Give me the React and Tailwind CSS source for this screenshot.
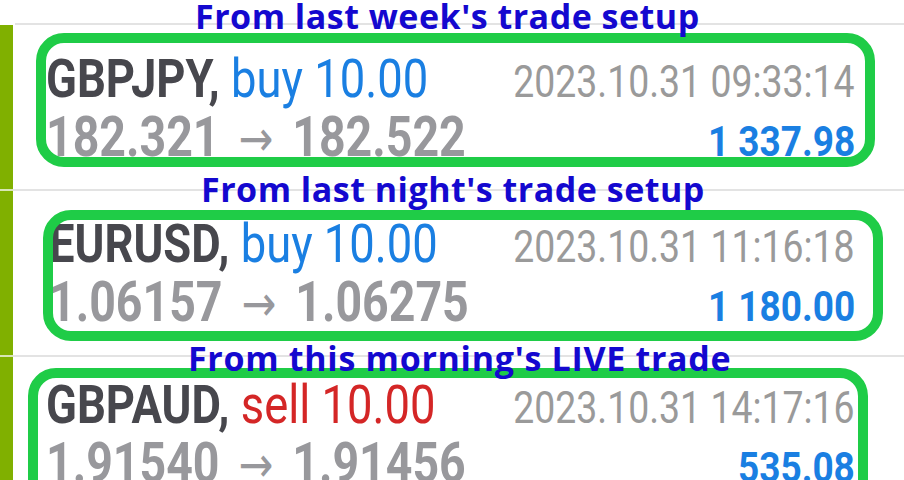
import React from 'react';

const trades = [
  {
    symbol: 'GBPJPY',
    side: 'buy',
    lots: '10.00',
    time: '2023.10.31 09:33:14',
    open: '182.321',
    close: '182.522',
    profit: '1 337.98',
    pad: 'pl-[33px] pt-[25px]',
    first: true,
  },
  {
    symbol: 'EURUSD',
    side: 'buy',
    lots: '10.00',
    time: '2023.10.31 11:16:18',
    open: '1.06157',
    close: '1.06275',
    profit: '1 180.00',
    pad: 'pl-[36px] pt-[24px]',
  },
  {
    symbol: 'GBPAUD',
    side: 'sell',
    lots: '10.00',
    time: '2023.10.31 14:17:16',
    open: '1.91540',
    close: '1.91456',
    profit: '535.08',
    pad: 'pl-[33px] pt-[19px]',
  },
];

function TradeRow({ trade }) {
  const sideColor = trade.side === 'buy' ? 'text-[#1a7fe2]' : 'text-[#d42626]';

  return (
    <div>
      {trade.first ? (
        <div className="h-[2px] ml-[15px] bg-[#e3e3e3]" />
      ) : (
        <div className="flex h-[2px]">
          <div className="w-[13px] shrink-0 bg-[#d8e6b4]" />
          <div className="flex-1 bg-[#e3e3e3]" />
        </div>
      )}
      <div className="flex h-[164px]">
        <div className="w-[13px] shrink-0 bg-[#80b000]" />
        <div className={`flex-1 min-w-0 pr-[49px] ${trade.pad}`}>
          <div className="flex items-baseline h-[58px] leading-[58px]">
            <span className="shrink-0 inline-block origin-left scale-x-[0.84] whitespace-nowrap text-[54px]">
              <span className="font-bold text-[#47474d]">{trade.symbol},</span>{' '}
              <span className={sideColor}>
                {trade.side} {trade.lots}
              </span>
            </span>
            <div className="flex-1 min-w-0 flex justify-end">
              <span className="shrink-0 inline-block origin-right scale-x-[0.85] whitespace-nowrap text-[44px] text-[#9a9a9a]">
                {trade.time}
              </span>
            </div>
          </div>
          <div className="flex items-baseline h-[58px] leading-[58px]">
            <span className="shrink-0 inline-block origin-left scale-x-[0.83] whitespace-nowrap text-[56px] text-[#98989c]">
              <span className="font-bold">{trade.open}</span>
              <span className="mx-[7px] font-normal text-[50px] font-['DejaVu_Sans',sans-serif]"> → </span>
              <span className="font-bold">{trade.close}</span>
            </span>
            <div className="flex-1 min-w-0 flex justify-end">
              <span className="shrink-0 inline-block origin-right scale-x-[0.86] whitespace-nowrap text-[43px] font-bold text-[#1a7fe2]">
                {trade.profit}
              </span>
            </div>
          </div>
        </div>
      </div>
    </div>
  );
}

export default function App() {
  return (
    <div className="relative w-[904px] h-[480px] overflow-hidden bg-white font-['Roboto',sans-serif]">
      <div className="h-[23px]" />
      {trades.map((t) => (
        <TradeRow key={t.symbol} trade={t} />
      ))}

      {/* green highlight boxes */}
      <div className="absolute left-[36px] top-[33px] w-[839px] h-[134px] rounded-[28px] border-[10px] border-[#1fcc47]" />
      <div className="absolute left-[43px] top-[210px] w-[840px] h-[131px] rounded-[28px] border-[10px] border-[#1fcc47]" />
      <div className="absolute left-[28px] top-[368px] w-[840px] h-[160px] rounded-[28px] border-[10px] border-[#1fcc47]" />

      {/* annotations */}
      <div className="absolute left-[195px] top-[-1px] leading-[34px] text-[34px] tracking-[0.5px] font-bold whitespace-nowrap text-[#1408cf] font-['Open_Sans',sans-serif]">
        From last week's trade setup
      </div>
      <div className="absolute left-[201px] top-[172px] leading-[34px] text-[34px] tracking-[0.5px] font-bold whitespace-nowrap text-[#1408cf] font-['Open_Sans',sans-serif]">
        From last night's trade setup
      </div>
      <div className="absolute left-[188px] top-[341px] leading-[34px] text-[34px] tracking-[0.7px] font-bold whitespace-nowrap text-[#1408cf] font-['Open_Sans',sans-serif]">
        From this morning's LIVE trade
      </div>
    </div>
  );
}
